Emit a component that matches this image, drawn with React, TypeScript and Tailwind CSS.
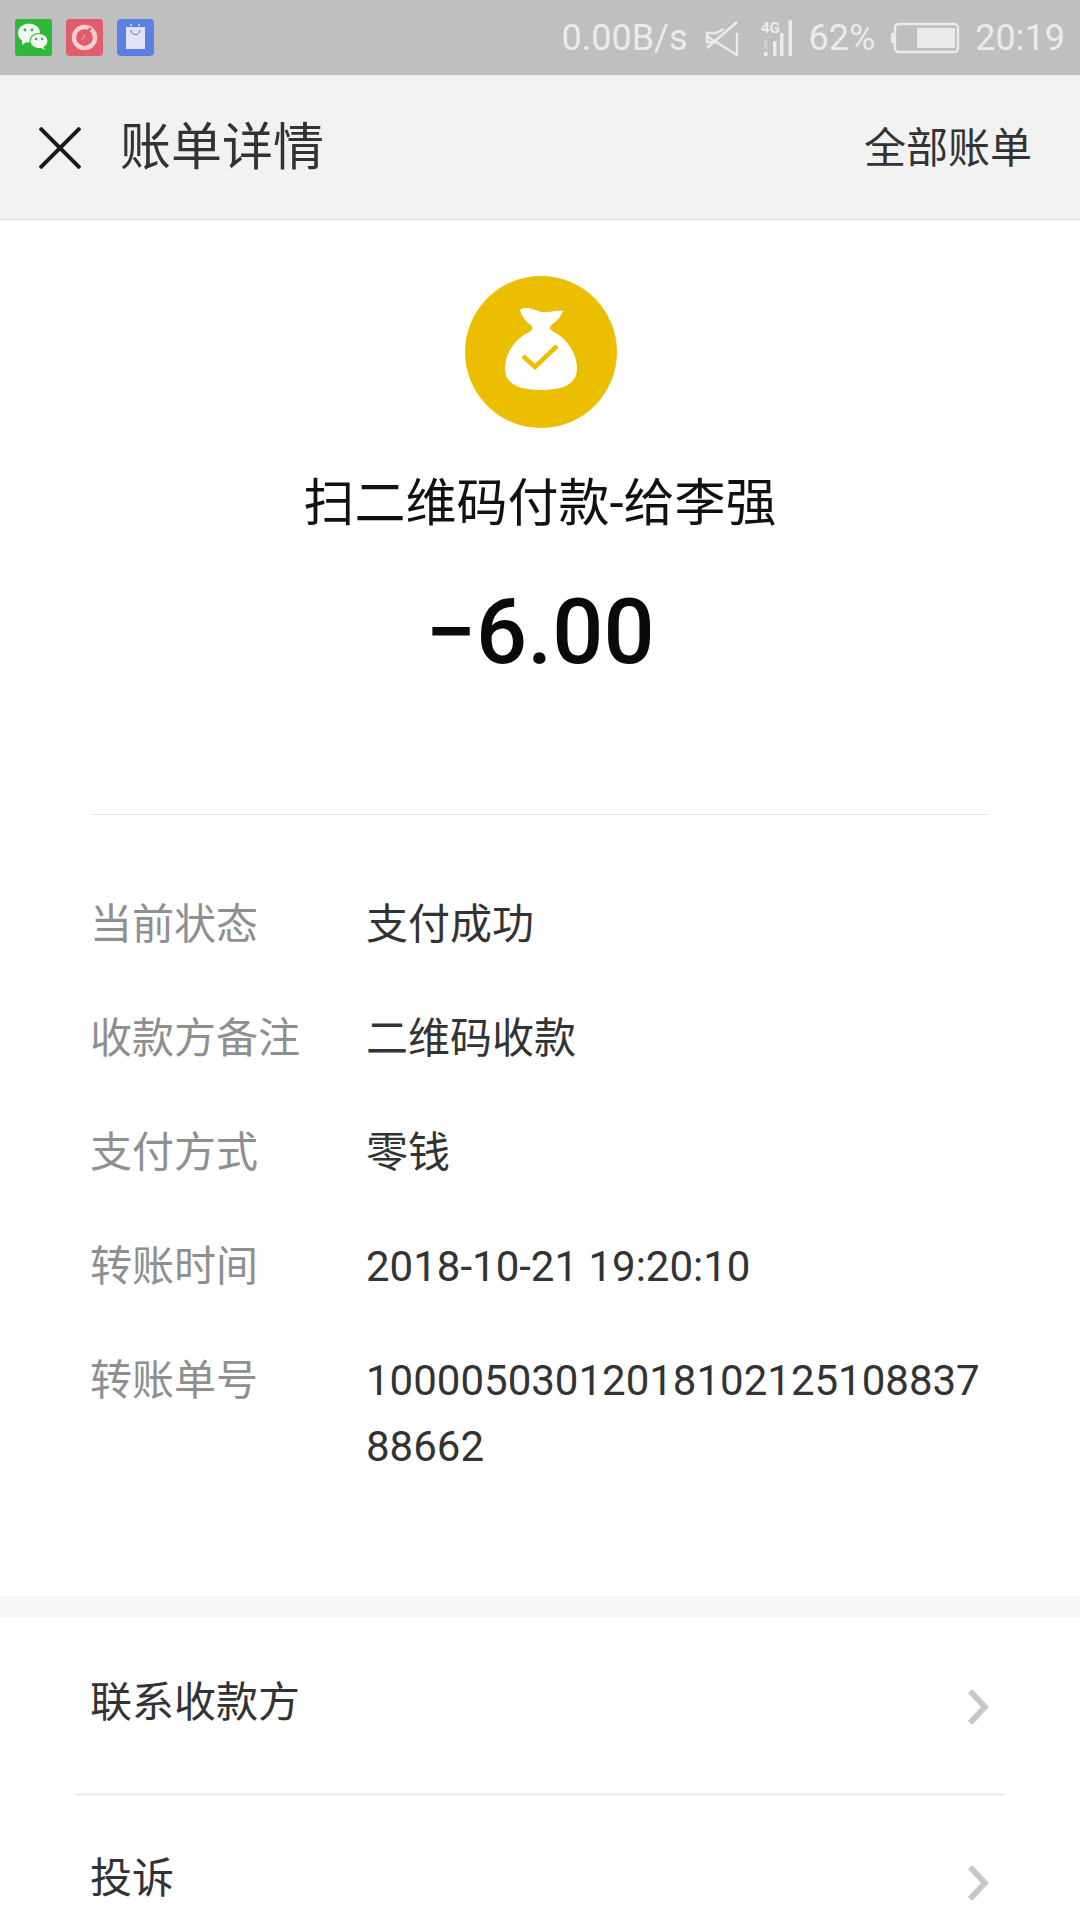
const cjk = "font-['Roboto','Noto_Sans_CJK_SC',sans-serif]";

const details = [
  { label: "当前状态", value: "支付成功" },
  { label: "收款方备注", value: "二维码收款" },
  { label: "支付方式", value: "零钱" },
  { label: "转账时间", value: "2018-10-21 19:20:10" },
  { label: "转账单号", value: "1000050301201810212510883788662" },
];

function WeChatIcon() {
  return (
    <svg width="37" height="37" viewBox="0 0 37 37" className="rounded-[3px]">
      <rect width="37" height="37" fill="#2fb83a" />
      <ellipse cx="14" cy="14" rx="11" ry="9.5" fill="#f2f7f2" />
      <path d="M7 20 L7 26 L13 22 Z" fill="#f2f7f2" />
      <ellipse cx="24" cy="22" rx="9.5" ry="8" fill="#2fb83a" />
      <ellipse cx="24" cy="22" rx="8.5" ry="7" fill="#f2f7f2" />
      <path d="M28 27 L30 31 L24 28 Z" fill="#f2f7f2" />
      <circle cx="10" cy="11" r="1.4" fill="#2fb83a" />
      <circle cx="17" cy="11" r="1.4" fill="#2fb83a" />
      <circle cx="21" cy="20" r="1.2" fill="#2fb83a" />
      <circle cx="27" cy="20" r="1.2" fill="#2fb83a" />
    </svg>
  );
}

function RedIcon() {
  return (
    <svg width="37" height="37" viewBox="0 0 37 37" className="rounded-[4px]">
      <rect width="37" height="37" fill="#e25d6c" />
      <circle cx="18.5" cy="18.5" r="10.5" fill="none" stroke="#f6cfd0" strokeWidth="4.5" />
      <circle cx="18.5" cy="18.5" r="8" fill="#e25d6c" />
      <path d="M21 13 L25 9" stroke="#e25d6c" strokeWidth="2.5" />
      <path d="M16 21 L19 16" stroke="#ee8f98" strokeWidth="1.5" />
    </svg>
  );
}

function BagIcon() {
  return (
    <svg width="37" height="37" viewBox="0 0 37 37" className="rounded-[4px]">
      <rect width="37" height="37" fill="#5b7fe2" />
      <path d="M9 8 H28 V30 H9 Z" fill="#dfe3f3" />
      <path d="M14 11 C14 17 23 17 23 11" fill="none" stroke="#6f7fb0" strokeWidth="1" />
      <circle cx="14" cy="6" r="1" fill="#dfe3f3" />
      <circle cx="22" cy="6" r="1" fill="#dfe3f3" />
    </svg>
  );
}

function MuteIcon() {
  return (
    <svg width="34" height="36" viewBox="0 0 34 36" fill="none" stroke="#ebebeb" strokeWidth="2.4">
      <path d="M32 13 V35 L11 22 H2 V13 H11 L19 9" />
      <path d="M2 28 L32 2" />
      <path d="M12 23 L2 16" />
    </svg>
  );
}

function SignalIcon() {
  return (
    <svg width="32" height="39" viewBox="0 0 32 39" fill="#ebebeb">
      <text x="0" y="15" fontSize="15" fontWeight="700" fontFamily="Roboto, sans-serif">4G</text>
      <rect x="3" y="34" width="3.5" height="4" />
      <rect x="12" y="23" width="3.5" height="15" />
      <rect x="19" y="15" width="3.5" height="23" />
      <rect x="27.5" y="2" width="3.5" height="36" />
      <rect x="3" y="22" width="3.5" height="9" opacity="0.4" />
    </svg>
  );
}

function BatteryIcon() {
  return (
    <svg width="69" height="32" viewBox="0 0 69 32" fill="none">
      <rect x="0" y="11" width="3" height="10" fill="#ebebeb" />
      <rect x="4" y="2" width="63" height="28" rx="4" stroke="#ebebeb" strokeWidth="2.4" />
      <rect x="26" y="6" width="38" height="20" fill="#ebebeb" />
    </svg>
  );
}

function MoneyBagIcon() {
  return (
    <svg width="152" height="152" viewBox="0 0 152 152" className="ml-[2px]">
      <circle cx="76" cy="76" r="76" fill="#ebbf00" />
      <path
        d="M55 34 C60 30 68 33 76 36 C84 37 90 34 98 35 C96 41 90 47 86 49 C84 51 85 53 87 55 C102 62 112 78 112 92 C112 110 95 114 76 114 C57 114 40 110 40 92 C40 78 50 62 66 55 C68 53 68 51 66 49 C61 46 57 41 55 34 Z"
        fill="#ffffff"
      />
      <path d="M58 80 L70 91 L92 70" fill="none" stroke="#ebbf00" strokeWidth="4.5" />
    </svg>
  );
}

function Chevron() {
  return (
    <svg width="22" height="34" viewBox="0 0 22 34" fill="none" className="mt-[10px]">
      <path d="M3 1 L18 17 L3 33" stroke="#c8c8cc" strokeWidth="6" />
    </svg>
  );
}

export default function App() {
  return (
    <div className={`h-[1920px] w-[1080px] overflow-hidden bg-white ${cjk}`}>
      <div className="flex h-[75px] items-center justify-between bg-[#bfbfbf] px-[15px]">
        <div className="flex items-center gap-[14px]">
          <WeChatIcon />
          <RedIcon />
          <BagIcon />
        </div>
        <div className="flex items-center text-[36px] text-[#ebebeb]">
          <span>0.00B/s</span>
          <span className="ml-[17px] flex"><MuteIcon /></span>
          <span className="ml-[22px] flex"><SignalIcon /></span>
          <span className="ml-[16px]">62%</span>
          <span className="ml-[16px] flex"><BatteryIcon /></span>
          <span className="ml-[15px]">20:19</span>
        </div>
      </div>

      <div className="flex h-[145px] items-center border-b border-[#dcdcdc] bg-[#f2f2f2] pl-[39px] pr-[48px] pt-[2px]">
        <svg width="42" height="42" viewBox="0 0 42 42" fill="none" stroke="#1a1a1a" strokeWidth="4">
          <path d="M1 1 L41 41 M41 1 L1 41" />
        </svg>
        <div className="ml-[39px] flex-1 text-[51px] text-[#333333]">账单详情</div>
        <div className="text-[42px] text-[#333333]">全部账单</div>
      </div>

      <div className="flex flex-col items-center pt-[56px]">
        <MoneyBagIcon />
        <div className="mt-[43px] text-[51px] leading-[66px] text-[#111111]">扫二维码付款-给李强</div>
        <div className="mt-[46px] text-[90px] font-medium leading-[100px] text-[#0a0a0a]">−6.00</div>
      </div>

      <div className="ml-[91px] mr-[91px] mt-[131px] border-t border-[#e5e5e5]" />

      <div className="ml-[90px] mr-[81px] mt-[77px] flex flex-col gap-[48px] pb-[116px] text-[42px] leading-[66px]">
        {details.map((d) => (
          <div key={d.label} className="flex">
            <div className="w-[276px] shrink-0 text-[#8f8f8f]">{d.label}</div>
            <div className="min-w-0 flex-1 break-all text-[#333333]">{d.value}</div>
          </div>
        ))}
      </div>

      <div className="h-[21px] bg-[#f7f7f7]" />

      <div className="mx-[75px] flex h-[179px] items-center justify-between border-b-[3px] border-[#f0f0f0] pb-[6px] pl-[15px] pr-[16px] text-[42px] text-[#333333]">
        <span>联系收款方</span>
        <Chevron />
      </div>
      <div className="mx-[75px] flex h-[178px] items-center justify-between pb-[14px] pl-[15px] pr-[16px] text-[42px] text-[#333333]">
        <span>投诉</span>
        <Chevron />
      </div>
    </div>
  );
}
